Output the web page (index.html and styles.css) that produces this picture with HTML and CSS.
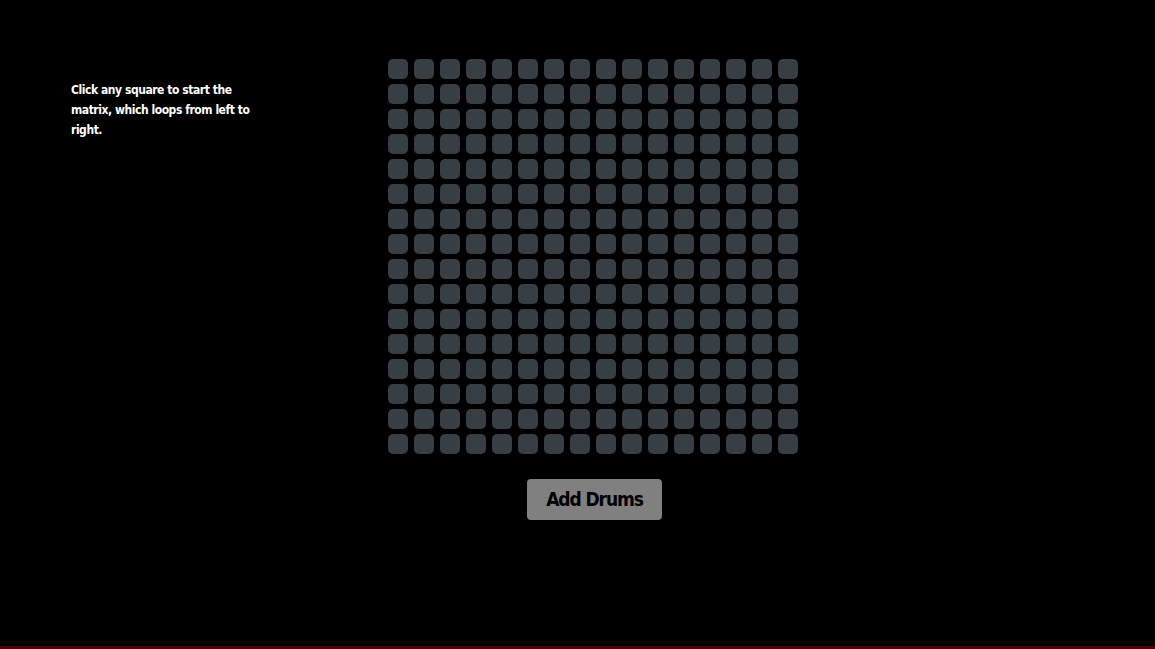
FILE: index.html
```html
<!DOCTYPE html>
<html>
<head>
<meta charset="utf-8">
<link rel="stylesheet" href="styles.css">
</head>
<body>
<div class="app">
  <aside class="sidebar">
    <p class="hint">Click any square to start the matrix, which loops from left to right.</p>
  </aside>
  <main class="main">
    <div class="matrix" id="matrix"></div>
    <button class="add-btn">Add Drums</button>
  </main>
</div>
<script>
  var m = document.getElementById('matrix');
  for (var i = 0; i < 256; i++) {
    var c = document.createElement('div');
    c.className = 'cell';
    m.appendChild(c);
  }
</script>
</body>
</html>
```
FILE: styles.css
```css
html, body {
  margin: 0;
  padding: 0;
  background: #000;
}
body {
  box-sizing: border-box;
  min-height: 100vh;
  border-bottom: 3px solid #560000;
  font-family: "DejaVu Sans", sans-serif;
  font-stretch: condensed;
}
.app {
  display: flex;
  align-items: flex-start;
}
.sidebar {
  width: 200px;
  margin-left: 71px;
  padding-top: 80px;
}
.hint {
  margin: 0;
  color: #fff;
  font-weight: bold;
  font-size: 12px;
  letter-spacing: -0.45px;
  line-height: 20px;
  width: 184px;
}
.main {
  margin-left: 117px;
  padding-top: 59px;
  display: flex;
  flex-direction: column;
  align-items: center;
}
.matrix {
  display: grid;
  grid-template-columns: repeat(16, 20px);
  grid-auto-rows: 20px;
  column-gap: 6px;
  row-gap: 5px;
}
.cell {
  background: #373e44;
  border-radius: 5px;
}
.add-btn {
  margin-top: 25px;
  margin-left: 3px;
  width: 135px;
  height: 41px;
  border: none;
  border-radius: 4px;
  background: #808080;
  color: #000;
  font-family: "DejaVu Sans", sans-serif;
  font-stretch: condensed;
  font-weight: bold;
  font-size: 19px;
  letter-spacing: -1.1px;
  padding: 0 0 2px 0;
}
```
